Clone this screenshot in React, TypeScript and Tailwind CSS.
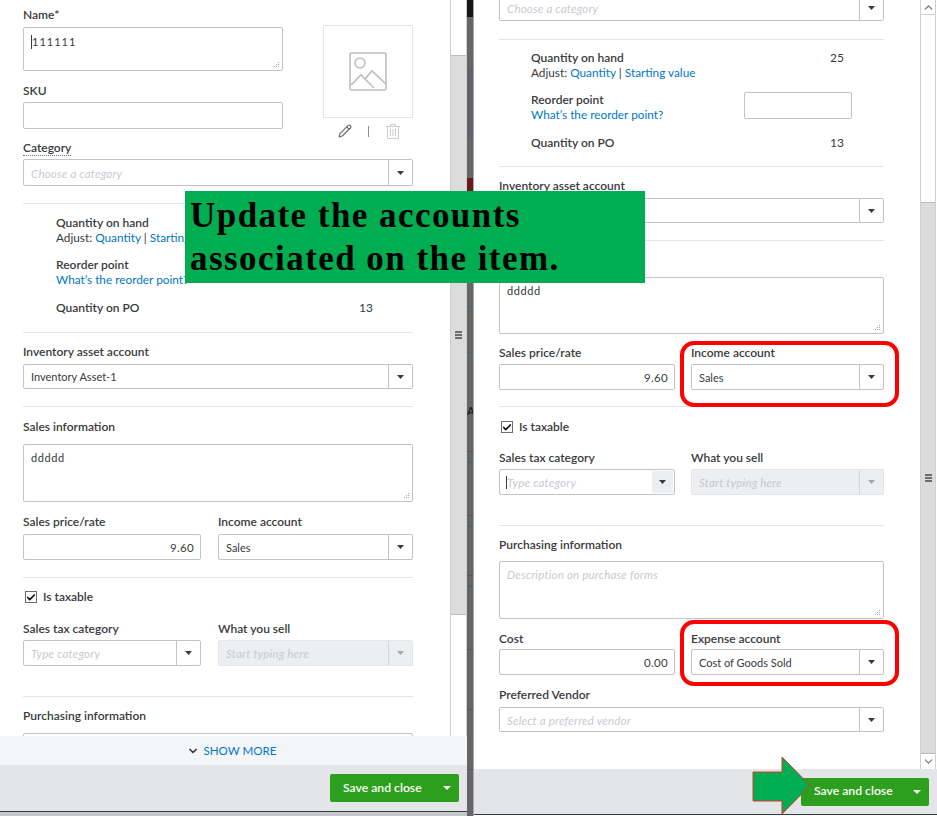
import { Check, ChevronDown, ChevronUp, Pencil } from 'lucide-react';

const labelCls = 'h-[14px] leading-[14px] text-[12px] font-semibold text-[#393a3d] whitespace-nowrap';
const boxCls = 'border border-[#c0c3c9] rounded-[2px] bg-white';
const hintCls = 'italic text-[11.5px] tracking-[0.2px] text-[#c8cacf]';

function Caret({ muted }: { muted?: boolean }) {
  return (
    <svg width="7" height="4" viewBox="0 0 7 4">
      <path d="M0 0h7L3.5 4z" fill={muted ? '#a4a7ad' : '#393a3d'} />
    </svg>
  );
}

function Resizer() {
  return (
    <svg className="absolute right-[2px] bottom-[2px]" width="7" height="7" viewBox="0 0 7 7" fill="#a8abb0">
      <rect x="5" y="1" width="1" height="1" />
      <rect x="3" y="3" width="1" height="1" />
      <rect x="5" y="3" width="1" height="1" />
      <rect x="1" y="5" width="1" height="1" />
      <rect x="3" y="5" width="1" height="1" />
      <rect x="5" y="5" width="1" height="1" />
    </svg>
  );
}

function Select({ text, placeholder, className }: { text?: string; placeholder?: string; className: string }) {
  return (
    <div className={`${boxCls} flex text-[11px] ${className}`}>
      <div className="flex-1 flex items-center pl-[7px] pt-[2px] min-w-0 whitespace-nowrap">
        {text ? (
          <span className="text-[#393a3d]">{text}</span>
        ) : (
          <span className={hintCls}>{placeholder}</span>
        )}
      </div>
      <div className="w-[24px] border-l border-[#c0c3c9] flex items-center justify-center">
        <Caret />
      </div>
    </div>
  );
}

function Money({ value, className }: { value: string; className: string }) {
  return (
    <div className={`${boxCls} flex items-center justify-end pr-[6px] pt-[1px] text-[11.5px] text-[#393a3d] tracking-[0.3px] ${className}`}>
      {value}
    </div>
  );
}

function Area({ text, placeholder, className }: { text?: string; placeholder?: string; className: string }) {
  return (
    <div className={`${boxCls} relative pl-[7px] pt-[6px] text-[11px] leading-[14px] ${className}`}>
      {text ? (
        <span className="text-[#393a3d] tracking-[0.6px]">{text}</span>
      ) : (
        <span className={hintCls}>{placeholder}</span>
      )}
      <Resizer />
    </div>
  );
}

function Rule({ className }: { className: string }) {
  return <div className={`h-px bg-[#e3e5e8] ${className}`} />;
}

function TaxableCheck({ className }: { className: string }) {
  return (
    <div className={`flex items-center ${className}`}>
      <div className="w-[12px] h-[12px] ml-[2px] border border-[#6b6c72] flex items-center justify-center bg-white">
        <Check size={11} strokeWidth={4} color="#111" />
      </div>
      <span className="ml-[6px] text-[12px] font-semibold text-[#393a3d] leading-[14px]">Is taxable</span>
    </div>
  );
}

function DisabledSelect({ className }: { className: string }) {
  return (
    <div className={`flex bg-[#eceef1] border border-[#e3e5e8] rounded-[2px] ${className}`}>
      <div className={`flex-1 flex items-center pl-[7px] pt-[1px] whitespace-nowrap ${hintCls}`}>Start typing here</div>
      <div className="w-[24px] border-l border-[#d4d7dc] flex items-center justify-center">
        <Caret muted />
      </div>
    </div>
  );
}

function StockInfo({ className, children }: { className: string; children?: React.ReactNode }) {
  return (
    <div className={`relative ${className}`}>
      <div className="flex justify-between">
        <div className={labelCls}>Quantity on hand</div>
        <div className="h-[14px] leading-[14px] text-[12px] text-[#393a3d]">25</div>
      </div>
      <div className="mt-px h-[14px] leading-[14px] text-[11.8px] text-[#393a3d] whitespace-nowrap">
        Adjust: <span className="text-[#0077c5]">Quantity</span> | <span className="text-[#0077c5]">Starting value</span>
      </div>
      <div className={`mt-[13px] ${labelCls}`}>Reorder point</div>
      <div className="mt-px h-[14px] leading-[14px] text-[11.8px] text-[#0077c5] whitespace-nowrap">What’s the reorder point?</div>
      <div className="mt-[14px] flex justify-between">
        <div className={labelCls}>Quantity on PO</div>
        <div className="h-[14px] leading-[14px] text-[12px] text-[#393a3d]">13</div>
      </div>
      {children}
    </div>
  );
}

function SaveButton({ className }: { className: string }) {
  return (
    <div className={`h-[28px] bg-[#2ca01c] rounded-[2px] flex items-center justify-between pl-[13px] pr-[8px] ${className}`}>
      <span className="text-[12.2px] font-semibold text-white whitespace-nowrap">Save and close</span>
      <svg width="8" height="4" viewBox="0 0 8 4">
        <path d="M0 0h8L4 4z" fill="#fff" />
      </svg>
    </div>
  );
}

function Grip() {
  return (
    <div className="w-[7px] flex flex-col gap-[1px]">
      <div className="h-[2px] bg-[#6b6c72]" />
      <div className="h-[2px] bg-[#6b6c72]" />
      <div className="h-[2px] bg-[#6b6c72]" />
    </div>
  );
}

function LeftPanel() {
  return (
    <div className="w-[467px] h-full flex flex-col bg-[#c5c7ca] shrink-0">
      <div className="h-[736px] flex bg-white overflow-hidden">
        <div className="w-[450px] shrink-0 pl-[23px] pr-[37px] pt-[8px]">
          <div className="flex h-[121px]">
            <div className="w-[260px]">
              <div className={labelCls}>Name*</div>
              <div className={`${boxCls} relative mt-[5px] h-[44px] pl-[7px] pt-[7px] flex items-start text-[11px] leading-[14px] text-[#393a3d] tracking-[1px]`}>
                <span className="w-px h-[14px] bg-[#393a3d]" />
                111111
                <Resizer />
              </div>
              <div className={`mt-[13px] ${labelCls}`}>SKU</div>
              <div className={`${boxCls} mt-[4px] h-[27px]`} />
            </div>
            <div className="ml-[40px] w-[90px] mt-[17px] shrink-0">
              <div className="h-[93px] border border-[#e3e5e8] flex items-center justify-center">
                <svg width="38" height="40" viewBox="0 0 38 40" fill="none" stroke="#babec5" strokeWidth="1.6">
                  <rect x="1" y="1" width="36" height="37" rx="1.5" />
                  <circle cx="11" cy="11" r="5" />
                  <path d="M2 33l10-10 13 13M16 27l7-8 14 13" />
                </svg>
              </div>
              <div className="flex items-center mt-[5px] h-[16px]">
                <Pencil className="ml-[15px]" size={14} color="#6b6c72" />
                <div className="ml-[16px] w-px h-[11px] bg-[#8d9096]" />
                <svg className="ml-[17px]" width="14" height="15" viewBox="0 0 14 15" fill="none" stroke="#c9ccd1">
                  <path d="M0 2.5h14M4.5 2.5V.5h5v2M1.5 2.5v12h11v-12M4.5 5v7M7 5v7M9.500 5v7" />
                </svg>
              </div>
            </div>
          </div>
          <div className={`mt-[12px] ${labelCls}`}>
            <span className="border-b border-dotted border-[#6b6c72]">Category</span>
          </div>
          <Select className="mt-[4px] h-[27px]" placeholder="Choose a category" />
          <Rule className="mt-[17px]" />
          <StockInfo className="mt-[12px] pl-[33px] w-[350px]" />
          <Rule className="mt-[17px]" />
          <div className={`mt-[12px] ${labelCls}`}>Inventory asset account</div>
          <Select className="mt-[5px] h-[25px]" text="Inventory Asset-1" />
          <Rule className="mt-[17px]" />
          <div className={`mt-[13px] ${labelCls}`}>Sales information</div>
          <Area className="mt-[10px] h-[58px]" text="ddddd" />
          <div className="mt-[13px] flex gap-[17px]">
            <div className="w-[178px]">
              <div className={labelCls}>Sales price/rate</div>
              <Money className="mt-[5px] h-[26px]" value="9.60" />
            </div>
            <div className="w-[195px]">
              <div className={labelCls}>Income account</div>
              <Select className="mt-[5px] h-[26px]" text="Sales" />
            </div>
          </div>
          <Rule className="mt-[17px]" />
          <TaxableCheck className="mt-[12px] h-[14px]" />
          <div className="mt-[18px] flex gap-[17px]">
            <div className="w-[178px]">
              <div className={labelCls}>Sales tax category</div>
              <Select className="mt-[4px] h-[26px]" placeholder="Type category" />
            </div>
            <div className="w-[195px]">
              <div className={labelCls}>What you sell</div>
              <DisabledSelect className="mt-[4px] h-[26px]" />
            </div>
          </div>
          <Rule className="mt-[30px]" />
          <div className={`mt-[12px] ${labelCls}`}>Purchasing information</div>
          <div className={`${boxCls} mt-[10px] h-[58px]`} />
        </div>
        <div className="w-[17px] flex flex-col border-x border-[#d0d0d0]">
          <div className="h-[55px] bg-white" />
          <div className="h-[560px] bg-[#dcdcdc] border-y border-[#bdbdbd] flex items-center justify-center">
            <Grip />
          </div>
          <div className="flex-1 bg-white" />
        </div>
      </div>
      <div className="h-[29px] bg-[#f4f5f8] flex items-center justify-center pr-[3px] text-[11.6px] text-[#0077c5]">
        <ChevronDown size={12} strokeWidth={3.5} color="#393a3d" />
        <span className="ml-[4px]">SHOW MORE</span>
      </div>
      <div className="h-[46px] bg-[#e3e5e8] flex items-center justify-end pr-[8px]">
        <SaveButton className="w-[129px]" />
      </div>
      <div className="h-px bg-[#393a3d]" />
    </div>
  );
}

function BackdropStrip() {
  return (
    <div className="w-[7px] h-full shrink-0 flex flex-col bg-[#666] border-r border-[#a8a8a8] overflow-hidden text-[#222]">
      <div className="h-[17px] shrink-0 bg-[#161616]" />
      <div className="h-[51px] shrink-0" />
      <div className="h-[70px] shrink-0 bg-[#5f6268]" />
      <div className="h-[40px] shrink-0" />
      <div className="h-[13px] shrink-0 bg-[#6b1a1a]" />
      <div className="h-[115px] shrink-0" />
      <div className="h-px shrink-0 bg-[#3a6a8a]" />
      <div className="h-[45px] shrink-0" />
      <div className="h-px shrink-0 bg-[#3a6a8a]" />
      <div className="h-[52px] shrink-0" />
      <div className="h-[12px] shrink-0 leading-[12px] text-[11px] font-bold">A</div>
      <div className="h-[35px] shrink-0 border-b border-[#555]" />
      <div className="h-[14px] shrink-0 flex items-end">
        <ChevronDown size={7} strokeWidth={4} color="#1d6b1d" />
      </div>
      <div className="h-[50px] shrink-0 border-b border-[#555]" />
      <div className="h-[14px] shrink-0 flex items-end">
        <ChevronDown size={7} strokeWidth={4} color="#1d6b1d" />
      </div>
      <div className="h-[46px] shrink-0 border-b border-[#555]" />
      <div className="h-[14px] shrink-0 flex items-end">
        <ChevronDown size={7} strokeWidth={4} color="#1d6b1d" />
      </div>
      <div className="h-[60px] shrink-0 border-b border-[#555]" />
      <div className="h-[60px] shrink-0 border-b border-[#555]" />
      <div className="h-[60px] shrink-0 border-b border-[#555]" />
    </div>
  );
}

function RightPanel() {
  return (
    <div className="flex-1 h-full flex flex-col bg-white">
      <div className="h-[769px] flex overflow-hidden">
        <div className="w-[447px] shrink-0 pl-[25px] pr-[37px]">
          <Select className="-mt-[6px] h-[27px]" placeholder="Choose a category" />
          <Rule className="mt-[18px]" />
          <StockInfo className="mt-[11px] pl-[32px] w-[345px]">
            <div className={`${boxCls} absolute left-[245px] top-[41px] w-[108px] h-[27px]`} />
          </StockInfo>
          <Rule className="mt-[16px]" />
          <div className={`mt-[12px] ${labelCls}`}>Inventory asset account</div>
          <Select className="mt-[5px] h-[25px]" text="Inventory Asset-1" />
          <Rule className="mt-[17px]" />
          <div className={`mt-[13px] ${labelCls}`}>Sales information</div>
          <Area className="mt-[9px] h-[57px]" text="ddddd" />
          <div className="mt-[12px] flex gap-[16px]">
            <div className="w-[176px]">
              <div className={labelCls}>Sales price/rate</div>
              <Money className="mt-[4px] h-[26px]" value="9.60" />
            </div>
            <div className="w-[193px]">
              <div className={labelCls}>Income account</div>
              <Select className="mt-[4px] h-[26px]" text="Sales" />
            </div>
          </div>
          <Rule className="mt-[16px]" />
          <TaxableCheck className="mt-[13px] h-[14px]" />
          <div className="mt-[17px] flex gap-[16px]">
            <div className="w-[176px]">
              <div className={labelCls}>Sales tax category</div>
              <div className={`${boxCls} mt-[4px] h-[26px] flex pr-px py-px`}>
                <div className="flex-1 flex items-center pl-[6px] pt-[1px]">
                  <span className="w-px h-[13px] bg-[#393a3d]" />
                  <span className={hintCls}>Type category</span>
                </div>
                <div className="w-[21px] bg-[#eceef1] flex items-center justify-center">
                  <Caret />
                </div>
              </div>
            </div>
            <div className="w-[193px]">
              <div className={labelCls}>What you sell</div>
              <DisabledSelect className="mt-[4px] h-[26px]" />
            </div>
          </div>
          <Rule className="mt-[30px]" />
          <div className={`mt-[12px] ${labelCls}`}>Purchasing information</div>
          <Area className="mt-[9px] h-[58px]" placeholder="Description on purchase forms" />
          <div className="mt-[13px] flex gap-[16px]">
            <div className="w-[176px]">
              <div className={labelCls}>Cost</div>
              <Money className="mt-[3px] h-[26px]" value="0.00" />
            </div>
            <div className="w-[193px]">
              <div className={labelCls}>Expense account</div>
              <Select className="mt-[3px] h-[26px]" text="Cost of Goods Sold" />
            </div>
          </div>
          <div className={`mt-[13px] ${labelCls}`}>Preferred Vendor</div>
          <Select className="mt-[5px] h-[25px]" placeholder="Select a preferred vendor" />
        </div>
        <div className="w-[16px] ml-[-1px] flex flex-col border-x border-[#d0d0d0]">
          <div className="h-[15px] flex items-center justify-center border-b border-[#d0d0d0]">
            <ChevronUp size={13} strokeWidth={2.5} color="#777" />
          </div>
          <div className="h-[187px] bg-white" />
          <div className="flex-1 bg-[#dcdcdc] border-y border-[#bdbdbd] flex items-center justify-center">
            <Grip />
          </div>
          <div className="h-[15px] flex items-center justify-center">
            <ChevronDown size={13} strokeWidth={2} color="#777" />
          </div>
        </div>
      </div>
      <div className="h-[45px] bg-[#e3e5e8] flex items-center justify-end pr-[8px]">
        <SaveButton className="w-[128px]" />
      </div>
      <div className="h-px bg-[#393a3d]" />
    </div>
  );
}

export default function App() {
  return (
    <div className="relative w-[937px] h-[816px] overflow-hidden flex bg-white font-[Lato,sans-serif]">
      <LeftPanel />
      <BackdropStrip />
      <RightPanel />

      {/* annotations pasted over the screenshot */}
      <div className="absolute left-[185px] top-[191px] w-[460px] h-[92px] bg-[#00ad50] pl-[5px] pt-[3px] font-['Liberation_Serif',serif] font-bold text-[35px] leading-[43px] text-black tracking-[1.45px] whitespace-nowrap">
        <div>Update the accounts</div>
        <div>associated on the item.</div>
      </div>
      <div className="absolute left-[680px] top-[341px] w-[219px] h-[66px] border-[4px] border-[#ff0000] rounded-[14px]" />
      <div className="absolute left-[680px] top-[620px] w-[219px] h-[66px] border-[4px] border-[#ff0000] rounded-[14px]" />
      <svg className="absolute left-[752px] top-[756px]" width="60" height="60" viewBox="0 0 60 60">
        <path d="M1 16h29V1l28 28.500L30 58V45H1z" fill="#00ad50" stroke="#e0352b" strokeWidth="1" />
      </svg>
    </div>
  );
}
